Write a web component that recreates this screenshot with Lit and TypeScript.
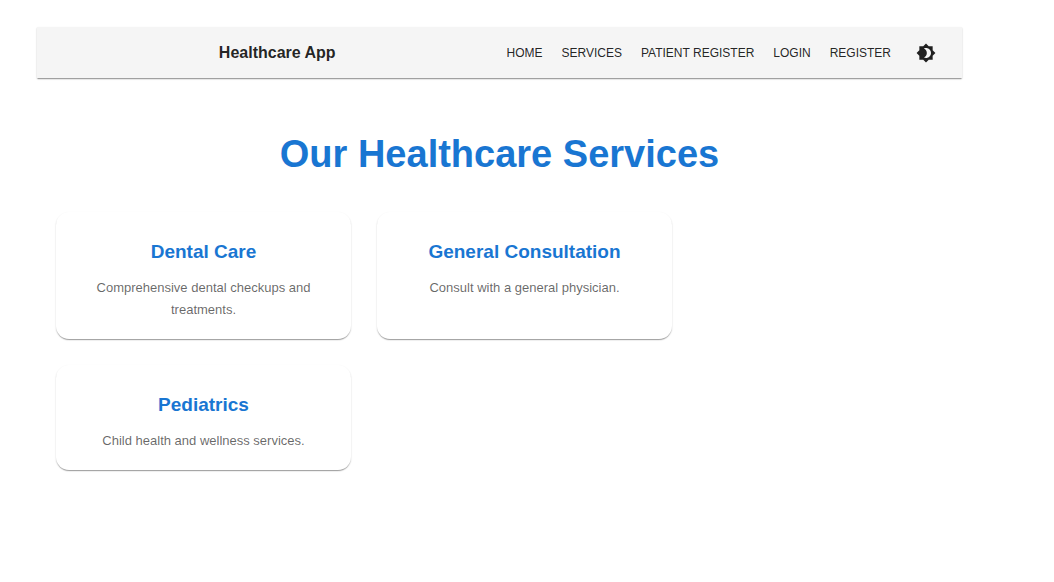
import { LitElement, html, css } from "lit";
import { customElement, property, state } from "lit/decorators.js";

const NAV_LINKS = ["Home", "Services", "Patient Register", "Login", "Register"];

const SERVICES = [
  { name: "Dental Care", description: "Comprehensive dental checkups and treatments." },
  { name: "General Consultation", description: "Consult with a general physician." },
  { name: "Pediatrics", description: "Child health and wellness services." },
];

@customElement("service-card")
class ServiceCard extends LitElement {
  @property() name = "";
  @property() description = "";

  static styles = css`
    :host {
      display: block;
      box-sizing: border-box;
      padding: 27px 26px 18px;
      border-radius: 13px;
      background: #fff;
      text-align: center;
      box-shadow: 0 2px 1px -1px rgba(0, 0, 0, 0.2), 0 1px 1px 0 rgba(0, 0, 0, 0.14),
        0 1px 2px 0 rgba(0, 0, 0, 0.12);
    }
    .name {
      margin: 0 0 12px;
      color: #1976d2;
      font-size: 19px;
      line-height: 26px;
      font-weight: 700;
    }
    .description {
      margin: 0;
      color: rgba(0, 0, 0, 0.6);
      font-size: 13px;
      line-height: 22px;
    }
  `;

  render() {
    return html`
      <h2 class="name">${this.name}</h2>
      <p class="description">${this.description}</p>
    `;
  }
}

@customElement("app-root")
class AppRoot extends LitElement {
  @state() private dark = false;

  static styles = css`
    :host {
      display: block;
      box-sizing: border-box;
      min-height: 100vh;
      padding: 27px 92px 27px 37px;
      background: #fff;
      color: rgba(0, 0, 0, 0.87);
      font-family: "Liberation Sans", Arial, sans-serif;
    }
    .bar {
      display: flex;
      align-items: center;
      min-height: 51px;
      padding: 0 20px;
      background: #f5f5f5;
      box-shadow: 0 2px 1px -1px rgba(0, 0, 0, 0.2), 0 1px 1px 0 rgba(0, 0, 0, 0.14),
        0 1px 2px 0 rgba(0, 0, 0, 0.12);
    }
    .brand {
      flex: 1;
      text-align: center;
      font-size: 16px;
      line-height: 26px;
      font-weight: 700;
    }
    .links {
      display: flex;
      gap: 1px;
    }
    .link {
      padding: 5px 9px;
      color: inherit;
      font-size: 12px;
      line-height: 20px;
      text-decoration: none;
      text-transform: uppercase;
    }
    .toggle {
      display: flex;
      margin: 0 0 0 10px;
      padding: 6px;
      border: 0;
      border-radius: 50%;
      background: none;
      color: inherit;
      cursor: pointer;
    }
    .toggle svg {
      width: 20px;
      height: 20px;
      fill: currentColor;
    }
    .heading {
      margin: 54px 0 36px;
      color: #1976d2;
      text-align: center;
      font-size: 38px;
      line-height: 44px;
      font-weight: 700;
    }
    .grid {
      display: grid;
      grid-template-columns: repeat(auto-fill, 295px);
      gap: 26px;
      padding: 0 19px;
    }
  `;

  render() {
    return html`
      <header class="bar">
        <div class="brand">Healthcare App</div>
        <nav class="links">
          ${NAV_LINKS.map((label) => html`<a class="link" href="#">${label}</a>`)}
        </nav>
        <button
          class="toggle"
          type="button"
          aria-label="Toggle theme"
          aria-pressed=${this.dark}
          @click=${() => (this.dark = !this.dark)}
        >
          <svg viewBox="0 0 24 24" aria-hidden="true">
            <path
              d="M20 8.69V4h-4.69L12 .69 8.69 4H4v4.69L.69 12 4 15.31V20h4.69L12 23.31 15.31 20H20v-4.69L23.31 12 20 8.69zM12 18c-.89 0-1.74-.2-2.5-.55C11.56 16.5 13 14.42 13 12s-1.44-4.5-3.5-5.45C10.26 6.2 11.11 6 12 6c3.31 0 6 2.69 6 6s-2.69 6-6 6z"
            />
          </svg>
        </button>
      </header>
      <main>
        <h1 class="heading">Our Healthcare Services</h1>
        <section class="grid">
          ${SERVICES.map(
            (s) => html`<service-card .name=${s.name} .description=${s.description}></service-card>`
          )}
        </section>
      </main>
    `;
  }
}
